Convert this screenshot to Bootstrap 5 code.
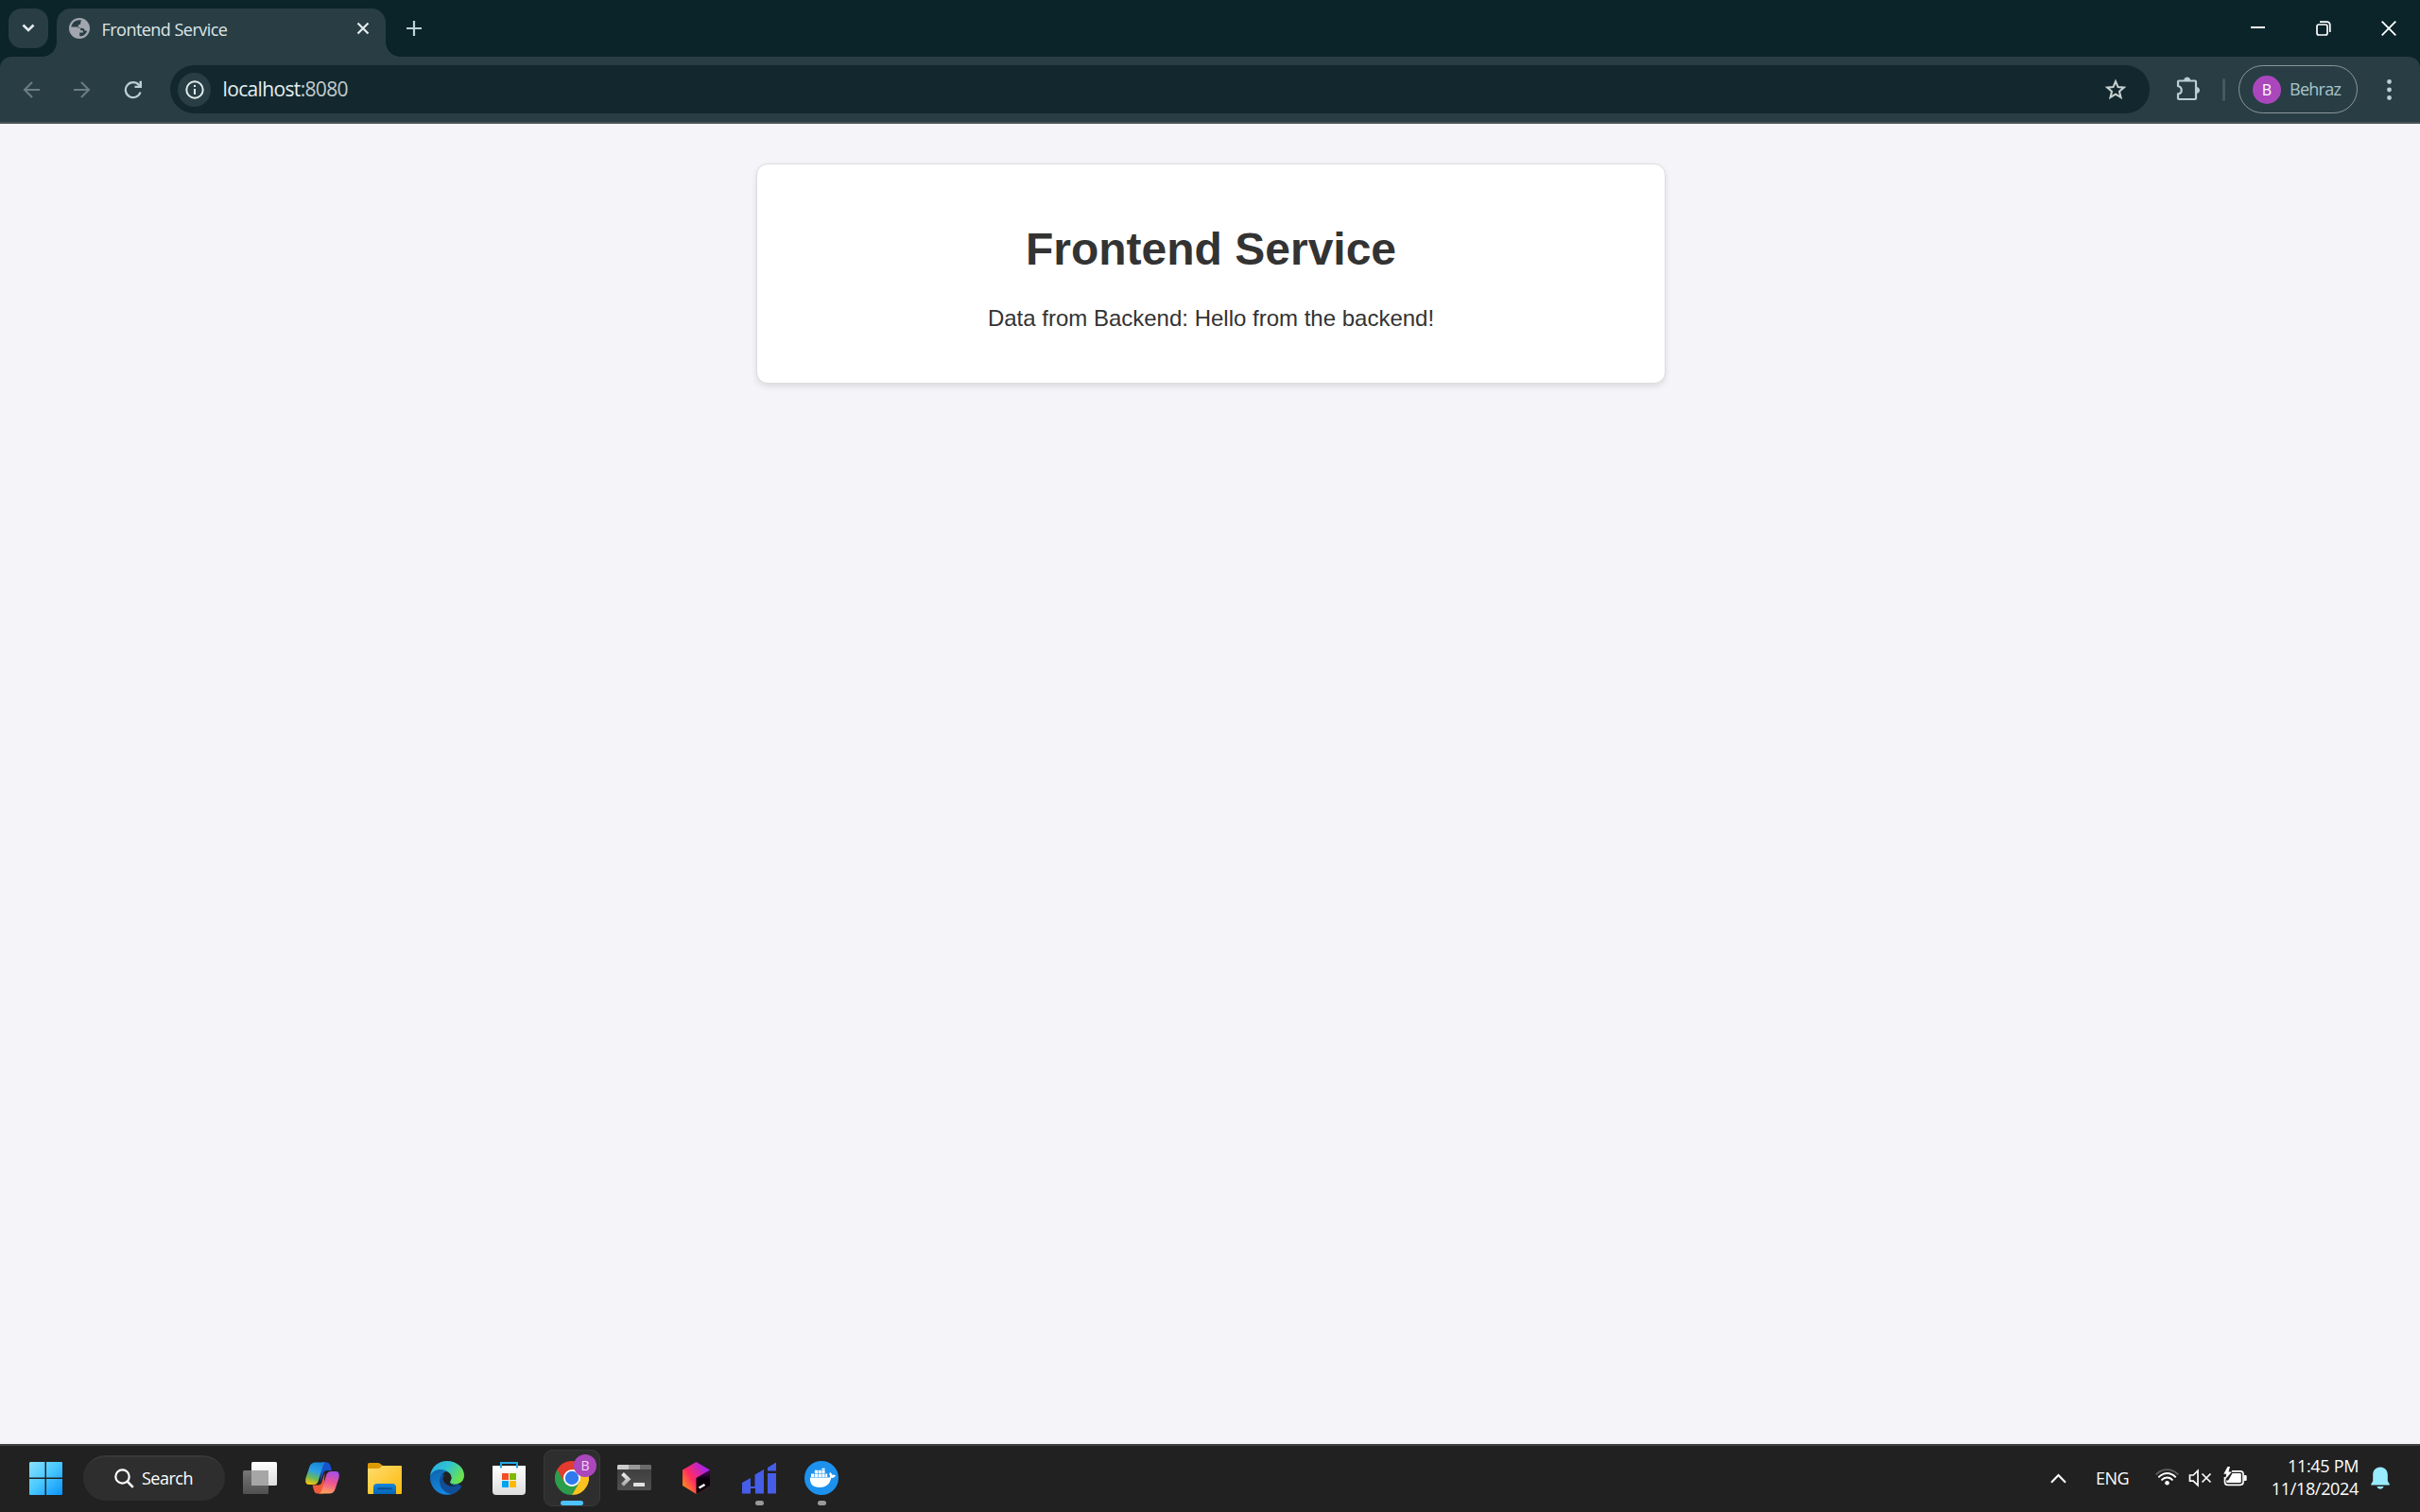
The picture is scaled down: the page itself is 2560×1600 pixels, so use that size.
<!DOCTYPE html>
<html lang="en">
<head>
<meta charset="utf-8">
<title>Frontend Service</title>
<link href="https://cdn.jsdelivr.net/npm/bootstrap@5.3.0/dist/css/bootstrap.min.css" rel="stylesheet">
<style>
:root{--frame:#0b2429;--chrome:#283e44;--ui:"Open Sans","Noto Sans",sans-serif}
html,body{height:100%}
body{font-family:var(--ui);font-size:18px;line-height:24px;background:#f4f4f9;overflow:hidden}
svg{display:block;flex:none}
.titlebar{height:60px;background:var(--frame);padding-left:9px;color:#dfe6e8}
.tab-menu{width:42px;height:42px;margin-top:9px;border-radius:14px;background:var(--chrome)}
.browser-tab{position:relative;width:348px;height:51px;margin:9px 0 0 9px;padding:0 17px 9px 13px;border-radius:15px 15px 0 0;background:var(--chrome)}
.browser-tab::before,.browser-tab::after{content:"";position:absolute;bottom:0;width:15px;height:15px}
.browser-tab::before{left:-15px;background:radial-gradient(circle at 0 0,transparent 14.5px,var(--chrome) 15px)}
.browser-tab::after{right:-15px;background:radial-gradient(circle at 100% 0,transparent 14.5px,var(--chrome) 15px)}
.tab-title{margin:2px 0 0 12.500px;letter-spacing:-.53px}
.new-tab{margin-left:22px;height:60px}
.win-buttons{height:60px;width:206px}
.win-buttons>span{width:69px;flex:none}
.toolbar-wrap{background:var(--frame)}
.toolbar{height:71px;background:var(--chrome);border-radius:12px 12px 0 0;border-bottom:2px solid #4a5356;padding:9px 18px 9px 22px}
.nav-ico{width:22px;margin-right:32px}
.omnibox{height:51px;width:2094px;border-radius:26px;background:#12282e;padding:0 24px 0 8px;margin-left:-4px}
.site-info{width:35px;height:36px;border-radius:50%;background:var(--chrome)}
.url{font-size:21px;line-height:30px;margin:0 0 1px 12.500px;color:#e6eef0;letter-spacing:-.65px}
.url span{color:#c3ccce}
.puzzle{margin:-2px 0 0 28px}
.divider{width:3px;height:24px;border-radius:2px;background:#435a61;margin:0 14px 0 23px}
.profile{width:126px;height:51px;border:1.5px solid #8b979b;border-radius:26px;padding-left:14px;color:#a9c5cc}
.avatar{width:30px;height:30px;border-radius:50%;background:#ab47bc;color:#fff;font-size:16px}
.profile-name{margin:-1px 0 0 9px;letter-spacing:-.75px}
.page{height:1397px;padding:42px 0 0 2px;font-family:"Liberation Sans",Arial,sans-serif;color:#333}
.panel{width:962px;height:233px;border:1px solid #ddd;border-radius:12px;background:#fff;box-shadow:0 3px 6px rgba(0,0,0,.1)}
.panel h1{font-size:48px;line-height:55px;margin:62px 0 0;color:#333;font-weight:700}
.panel p{font-size:24px;line-height:28px;margin:32px 0 0}
.taskbar{height:72px;background:#212121;border-top:2px solid #424242;color:#fff;padding:0 32px 2px 31px}
.search-pill{width:150px;height:48px;margin:0 4px 0 22px;border-radius:24px;background:#2e2e2e;border-top:2px solid #383838;padding:0 0 2px 33px}
.search-pill span{margin:0 0 0 8px;letter-spacing:-.5px}
.app{position:relative;width:66px;height:70px}
.app.active::before{content:"";position:absolute;inset:5px 3px 5px;border-radius:9px;background:#2e2e2e;border:1px solid #393939}
.app svg{position:relative}
.run-mark{position:absolute;left:50%;bottom:6px;height:5px;width:9px;margin-left:-4.5px;border-radius:3px;background:#9a9a9a}
.active .run-mark{width:24px;margin-left:-12px;background:#4cc2ff}
.app-badge{position:absolute;left:35px;top:10px;width:24px;height:24px;border-radius:50%;background:#ab47bc;color:#f0d9f4;font-size:14px}
.tray-chevron{margin-right:31px}
.wifi{margin:-2px 10px 0 28px}
.volume{margin-right:12px}
.battery{margin:-3px 0 0}
.clock{width:118px;margin-bottom:2px;text-align:right;letter-spacing:-.33px}
.lang{letter-spacing:-.5px;width:35px;margin-bottom:1px}
.bell{margin-left:13px}
</style>
<script src="https://cdn.jsdelivr.net/npm/bootstrap@5.3.0/dist/js/bootstrap.bundle.min.js"></script>
</head>
<body class="d-flex flex-column">
<header>
  <div class="titlebar d-flex">
    <div class="tab-menu d-flex align-items-center justify-content-center">
      <svg width="14" height="10" viewBox="0 0 14 10"><path d="M1.500 1.500 7 7l5.500-5.500" fill="none" stroke="#e4ebed" stroke-width="2.600"/></svg>
    </div>
    <div class="browser-tab d-flex align-items-center">
      <svg width="22" height="22" viewBox="0 0 22 22"><circle cx="11" cy="11" r="11" fill="#a3a6ae"/><path d="M12.500 2.500C7.500 1.500 3 5 2.400 9.600h6.100c2.600 0 3.800 1.400 3.800 3.600h2.500v2.400h-3.600v3.700c3.800.2 7-2.200 8-5.800-1 .4-1.800.3-2.600-.2-.3-1.700-1.200-2.500-3.100-2.500H9.800V8.400c0-1 .8-1.600 2.400-1.600V5c0-1 .3-1.600 1.400-2.200z" fill="#283e44"/></svg>
      <div class="tab-title">Frontend Service</div>
      <svg class="ms-auto" width="14" height="14" viewBox="0 0 14 14"><path d="m1.500 1.500 11 11m0-11-11 11" stroke="#e4ebed" stroke-width="2.200"/></svg>
    </div>
    <div class="new-tab d-flex align-items-center"><svg width="16" height="16" viewBox="0 0 16 16"><path d="M8 0v16M0 8h16" stroke="#bcd3d9" stroke-width="2.200"/></svg></div>
    <div class="win-buttons ms-auto d-flex align-items-center">
      <span class="d-flex"><svg class="ms-auto me-auto" width="16" height="16" viewBox="0 0 16 16"><path d="M0 7h15" stroke="#fff" stroke-width="2"/></svg></span>
      <span class="d-flex"><svg class="ms-auto me-auto" width="16" height="16" viewBox="0 0 16 16"><rect x="1" y="4" width="11" height="11" rx="2" fill="none" stroke="#fff" stroke-width="1.700"/><path d="M4 1.200h7.500q3.300 0 3.300 3.300V12" fill="none" stroke="#fff" stroke-width="1.700"/></svg></span>
      <span class="d-flex"><svg class="ms-auto me-auto" width="16" height="16" viewBox="0 0 16 16"><path d="m.7.7 14.600 14.600m0-14.600L.7 15.300" stroke="#fff" stroke-width="1.800"/></svg></span>
    </div>
  </div>
  <div class="toolbar-wrap">
    <div class="toolbar d-flex align-items-center">
      <div class="nav-ico"><svg width="22" height="20" viewBox="0 0 22 20"><path d="M20 10H4m8-8-8 8 8 8" fill="none" stroke="#6b7d82" stroke-width="2.100"/></svg></div>
      <div class="nav-ico"><svg width="22" height="20" viewBox="0 0 22 20"><path d="M2 10h16m-8-8 8 8-8 8" fill="none" stroke="#6b7d82" stroke-width="2.100"/></svg></div>
      <div class="nav-ico"><svg width="22" height="20" viewBox="0 0 22 20"><path d="M18.500 12.500A8 8 0 1 1 17 5l2 2" fill="none" stroke="#b8d0d6" stroke-width="2.200"/><path d="M20 .8V8h-7.500V5.800h5V.8z" fill="#b8d0d6"/></svg></div>
      <div class="omnibox d-flex align-items-center">
        <div class="site-info d-flex align-items-center justify-content-center"><svg width="20" height="20" viewBox="0 0 20 20"><circle cx="10" cy="10" r="8.700" fill="none" stroke="#e4ebed" stroke-width="2"/><path d="M9 9h2v6H9zM9 5h2v2H9z" fill="#e4ebed"/></svg></div>
        <div class="url">localhost<span>:8080</span></div>
        <svg class="ms-auto" width="24" height="24" viewBox="0 0 24 24"><path d="M12 3.200 14.500 9.100l6.300.5-4.800 4.200 1.500 6.200-5.500-3.300L6.500 20 8 13.800 3.200 9.600l6.300-.5z" fill="none" stroke="#c8cfd1" stroke-width="2.100"/></svg>
      </div>
      <svg class="puzzle" width="26" height="26" viewBox="0 0 26 26"><path d="M3 4.500h17a1 1 0 0 1 1 1V23a1 1 0 0 1-1 1H3a1 1 0 0 1-1-1v-4.500q3.700-.5 3.700-4T2 10V5.500a1 1 0 0 1 1-1z" fill="none" stroke="#b8d0d6" stroke-width="2.200"/><path d="M8.700 4a3 3 0 0 1 6 0zM21.500 11.500a3 3 0 0 1 0 6z" fill="#b8d0d6" stroke="#b8d0d6"/></svg>
      <div class="divider"></div>
      <div class="profile d-flex align-items-center">
        <div class="avatar d-flex align-items-center justify-content-center">B</div>
        <div class="profile-name">Behraz</div>
      </div>
      <svg class="ms-auto" width="24" height="24" viewBox="0 0 24 24" fill="#b8d0d6"><circle cx="9.500" cy="3.500" r="2.400"/><circle cx="9.500" cy="12" r="2.400"/><circle cx="9.500" cy="20.500" r="2.400"/></svg>
    </div>
  </div>
</header>

<main class="page">
  <div class="panel mx-auto text-center">
    <h1>Frontend Service</h1>
    <p>Data from Backend: Hello from the backend!</p>
  </div>
</main>

<footer class="taskbar d-flex align-items-center">
  <svg width="35" height="35" viewBox="0 0 35 35"><defs><linearGradient id="win" x1="0" y1="0" x2="35" y2="35" gradientUnits="userSpaceOnUse"><stop stop-color="#8be0ff"/><stop offset=".45" stop-color="#4ccbff"/><stop offset="1" stop-color="#0a94fb"/></linearGradient></defs><path d="M1 0h15.500v16.500H0V1zM18 0h16q1 0 1 1v15.500H18zM0 18h16.500v17H1q-1 0-1-1zM18 18h17v16q0 1-1 1H18z" fill="url(#win)"/></svg>
  <div class="search-pill d-flex align-items-center">
    <svg width="21" height="21" viewBox="0 0 21 21"><circle cx="8.500" cy="8.500" r="7.200" fill="none" stroke="#fff" stroke-width="2.200"/><path d="m13.500 13.500 6.300 6.300" stroke="#fff" stroke-width="2.500"/></svg>
    <span>Search</span>
  </div>

  <div class="app d-flex align-items-center justify-content-center"><svg width="36" height="36" viewBox="0 0 36 36"><defs><linearGradient id="tv" x2="0" y2="1"><stop stop-color="#fff"/><stop offset="1" stop-color="#ddd"/></linearGradient><linearGradient id="tg" x2="0" y2="1"><stop stop-color="#777"/><stop offset="1" stop-color="#505050"/></linearGradient></defs><rect y="10" width="27" height="25" rx="1.500" fill="url(#tg)"/><rect x="9" y="1" width="27" height="25" rx="1.500" fill="url(#tv)"/><path d="M9 10h18v16H10q-1 0-1-1z" fill="#a6a6a6"/></svg></div>

  <div class="app d-flex align-items-center justify-content-center"><svg width="36" height="36" viewBox="0 0 36 36"><defs><linearGradient id="ca" x1=".6" x2=".3" y2="1"><stop stop-color="#1687d9"/><stop offset=".4" stop-color="#2da0e5"/><stop offset=".7" stop-color="#67b75c"/><stop offset="1" stop-color="#f2c60d"/></linearGradient><linearGradient id="cb" x1=".6" x2=".4" y2="1"><stop stop-color="#a54dec"/><stop offset=".5" stop-color="#ef5590"/><stop offset="1" stop-color="#ffa15c"/></linearGradient></defs><path d="M17 1.500h5.500q3 0 4 3.500l1.500 5h-5q-3 0-4 3l-3 10z" fill="#1753cf"/><path d="M19 34.500h-6q-3 0-4-3.500l-1.500-5.500h6q3 0 4-3l3-10z" fill="#ef5b3b"/><path d="M11 1.500h11q-2.500.5-3.500 4l-4.500 15q-1.300 4.500-5 4.500H4Q-.8 25 .5 18L4.500 6Q6 1.500 11 1.500z" fill="url(#ca)"/><path d="M25 34.500H14q2.500-.5 3.500-4l4.500-15q1.300-4.500 5-4.500h5q4.800 0 3.500 7l-4 12q-1.500 4.500-6.500 4.500z" fill="url(#cb)"/></svg></div>

  <div class="app d-flex align-items-center justify-content-center"><svg width="36" height="36" viewBox="0 0 36 36"><defs><linearGradient id="fo" x2="1" y2="1"><stop stop-color="#ffdd70"/><stop offset="1" stop-color="#fcb90b"/></linearGradient><linearGradient id="fb" x2="0" y2="1"><stop stop-color="#1685d9"/><stop offset="1" stop-color="#0565b8"/></linearGradient></defs><path d="M0 3.500Q0 2 1.500 2H11q1.200 0 2 .8L16 5v6H0z" fill="#dc9b04"/><path d="M0 8h10q2 0 3.500-1.200L15.500 5H35q1 0 1 1v28q0 1-1 1H1q-1 0-1-1z" fill="url(#fo)"/><path d="M6 35V28q0-4 4-4h16q4 0 4 4v7z" fill="url(#fb)"/><path d="M11 29.200h14" stroke="#084e91" stroke-width="2" stroke-linecap="round"/></svg></div>

  <div class="app d-flex align-items-center justify-content-center"><svg width="36" height="36" viewBox="0 0 36 36"><defs><linearGradient id="eg" x1="0" x2="1" y2=".5"><stop stop-color="#2aa9dc"/><stop offset=".5" stop-color="#30c2d5"/><stop offset="1" stop-color="#68e34e"/></linearGradient><linearGradient id="eb" x2=".3" y2="1"><stop stop-color="#0d62ab"/><stop offset="1" stop-color="#1486dc"/></linearGradient></defs><path d="M0 17C0 28 8 36 18 36c6 0 12-3 15.500-9L14 14z" fill="#104f97"/><path d="M0 17C1 7 11 5 18 11c-5 1-8 6-8 10 0 7 5 13 13 14C10 38 0 29 0 17z" fill="url(#eb)"/><path d="M0 16C1 6 9 0 18 0c10 0 18 7 18 15 0 6-4 9.500-9.500 9.500-4 0-6-1.500-5.500-3 2.500-3 1.500-7-1-9C13 6.500 3 8.500 0 16z" fill="url(#eg)"/><path d="M20 13.500c-4-1-7 3-6 7 1.500 5 8 8 18 5.500-5 1.500-11 0-11-4 2.500-3 1.500-6-1-8.500z" fill="#212121"/></svg></div>

  <div class="app d-flex align-items-center justify-content-center"><svg width="36" height="36" viewBox="0 0 36 36"><defs><linearGradient id="st" x2="0" y2="1"><stop stop-color="#fff"/><stop offset="1" stop-color="#dedede"/></linearGradient></defs><path d="M0 5h35v27q0 4-4 4H4q-4 0-4-4z" fill="url(#st)"/><path d="M9 7.500V2h17v5.500" fill="none" stroke="#25a9e8" stroke-width="2"/><path d="M10 13h7v7h-7z" fill="#f25022"/><path d="M18 13h7v7h-7z" fill="#7fba00"/><path d="M10 21h7v7h-7z" fill="#00a4ef"/><path d="M18 21h7v7h-7z" fill="#ffb900"/></svg></div>

  <div class="app active d-flex align-items-center justify-content-center"><svg width="36" height="36" viewBox="0 0 36 36"><path d="M2.400 9A18 18 0 0 0 18 36l7.800-13.500L18 18z" fill="#2c9e4b"/><path d="M33.600 9A18 18 0 0 1 18 36l7.800-13.500L18 9z" fill="#fcc31e"/><path d="M2.400 9 10.200 22.500 18 9h15.600A18 18 0 0 0 2.400 9z" fill="#e33b2e"/><circle cx="18" cy="18" r="9" fill="#fff"/><circle cx="18" cy="18" r="7.200" fill="#2f7bee"/></svg><span class="app-badge d-flex align-items-center justify-content-center">B</span><span class="run-mark"></span></div>

  <div class="app d-flex align-items-center justify-content-center"><svg width="36" height="36" viewBox="0 0 36 36"><defs><linearGradient id="tm" x2="0" y2="1"><stop stop-color="#3b3b3b"/><stop offset="1" stop-color="#505050"/></linearGradient><linearGradient id="tp" x2="0" y2="1"><stop stop-color="#eee"/><stop offset="1" stop-color="#aaa"/></linearGradient></defs><rect y="4" width="36" height="27" rx="1.500" fill="url(#tm)"/><path d="M1 4h11v5H0V5z" fill="#ccc"/><path d="M12 4h12v5H12z" fill="#999"/><path d="M24 4h11l1 1v4H24z" fill="#6a6a6a"/><path d="m5.500 13.500 6 5.800-6 6" fill="none" stroke="url(#tp)" stroke-width="4"/><rect x="17" y="23" width="12" height="4" rx=".6" fill="#e2e2e2"/></svg></div>

  <div class="app d-flex align-items-center justify-content-center"><svg width="36" height="36" viewBox="0 0 36 36"><defs><linearGradient id="jb" x1="0" y1=".8" x2=".9" y2=".1"><stop stop-color="#ff9419"/><stop offset=".4" stop-color="#ff2b62"/><stop offset="1" stop-color="#9a22ff"/></linearGradient><linearGradient id="jk" x2="0" y2="1"><stop stop-color="#4b0763"/><stop offset=".4" stop-color="#080008"/><stop offset="1" stop-color="#080008"/></linearGradient></defs><path d="M17.500 1 32 9.500v17L17.500 35 3 26V9.500z" fill="url(#jb)"/><path d="M17.500 18 32 9.500v17L17.500 35z" fill="url(#jk)"/><path d="m20.500 28.500 6-3.500" stroke="#fff" stroke-width="2.600"/></svg></div>

  <div class="app d-flex align-items-center justify-content-center"><svg width="36" height="36" viewBox="0 0 36 36" fill="#465de8"><path d="M0 23 9 18v9h4.500V14.500L23 9v25.500h-9V29H9v5.500H0zM27 7l9-5.500v9h-9zM27 13h9v21.500h-9z"/></svg><span class="run-mark"></span></div>

  <div class="app d-flex align-items-center justify-content-center"><svg width="36" height="36" viewBox="0 0 36 36"><circle cx="18" cy="18" r="18" fill="#1d91ee"/><path d="M6 17.500h20q1.500 0 1-1.800-1.300-2 0-4 2 1.300 2.300 3 2-.4 3.700.6-1 2.800-4.700 2.800C26.500 25.500 22 28 16 28 9 28 5.500 24.500 6 17.500z" fill="#fff"/><g fill="#fff"><path d="M7 13.500h3.200V17H7zM10.800 13.500H14V17h-3.200zM14.600 13.500h3.200V17h-3.200zM18.400 13.500h3.200V17h-3.200zM22.200 13.500h2V17h-2zM10.800 9.700H14v3.200h-3.200zM14.600 9.700h3.200v3.200h-3.200zM18.400 9.700h3.200v3.200h-3.200zM18.400 7.800h3.200v1.400h-3.200z"/></g></svg><span class="run-mark"></span></div>

  <div class="ms-auto d-flex align-items-center">
    <svg class="tray-chevron" width="17" height="11" viewBox="0 0 17 11"><path d="M1 9.800 8.500 2 16 9.800" fill="none" stroke="#fff" stroke-width="2"/></svg>
    <div class="lang">ENG</div>
    <svg class="wifi" width="25" height="18" viewBox="0 0 25 18" fill="none" stroke-width="1.900"><path d="M.7 6.500Q5.500 1.200 12.500 1.200t11.800 5.300" stroke="#5c5c5c"/><path d="M3.300 9.300Q7.500 5 12.500 5t9.200 4.300M6.500 12.500Q9 9.500 12.500 9.500t6 3" stroke="#fff"/><circle cx="12.500" cy="15.300" r="2.300" fill="#fff"/></svg>
    <svg class="volume" width="25" height="20" viewBox="0 0 25 20" fill="none" stroke="#fff" stroke-width="1.700"><path d="M1.500 7h3.700L10 2.200v15.600L5.200 13.200H1.500zM14.500 5.500l9 9m0-9-9 9"/></svg>
    <svg class="battery" width="25" height="22" viewBox="0 0 25 22"><path d="M9 4.800h9q3 0 3 3v8.500q0 3-3 3H4.500q-3 0-3-3V11" fill="none" stroke="#fff" stroke-width="1.700"/><path d="M9.500 7h8.300q1 0 1 1v8q0 1-1 1H4q-.8 0-.8-1v-1.500h2zM22 9h1.500q1.200 0 1.200 1.300v3.400q0 1.300-1.200 1.300H22zM4.500 0 .3 7.800h3l-1.500 6L9 5.500H5.500L7 0z" fill="#fff"/></svg>
    <div class="clock">11:45 PM<br>11/18/2024</div>
    <svg class="bell" width="20" height="24" viewBox="0 0 20 24" fill="#99ebff"><path d="M10 .5c5 0 7.800 3.700 7.800 8v6.800l2 3.200v1H.2v-1l2-3.200V8.500c0-4.300 2.800-8 7.800-8zM6.300 21h7.400q-1 2.700-3.700 2.700T6.300 21z"/></svg>
  </div>
</footer>
</body>
</html>
